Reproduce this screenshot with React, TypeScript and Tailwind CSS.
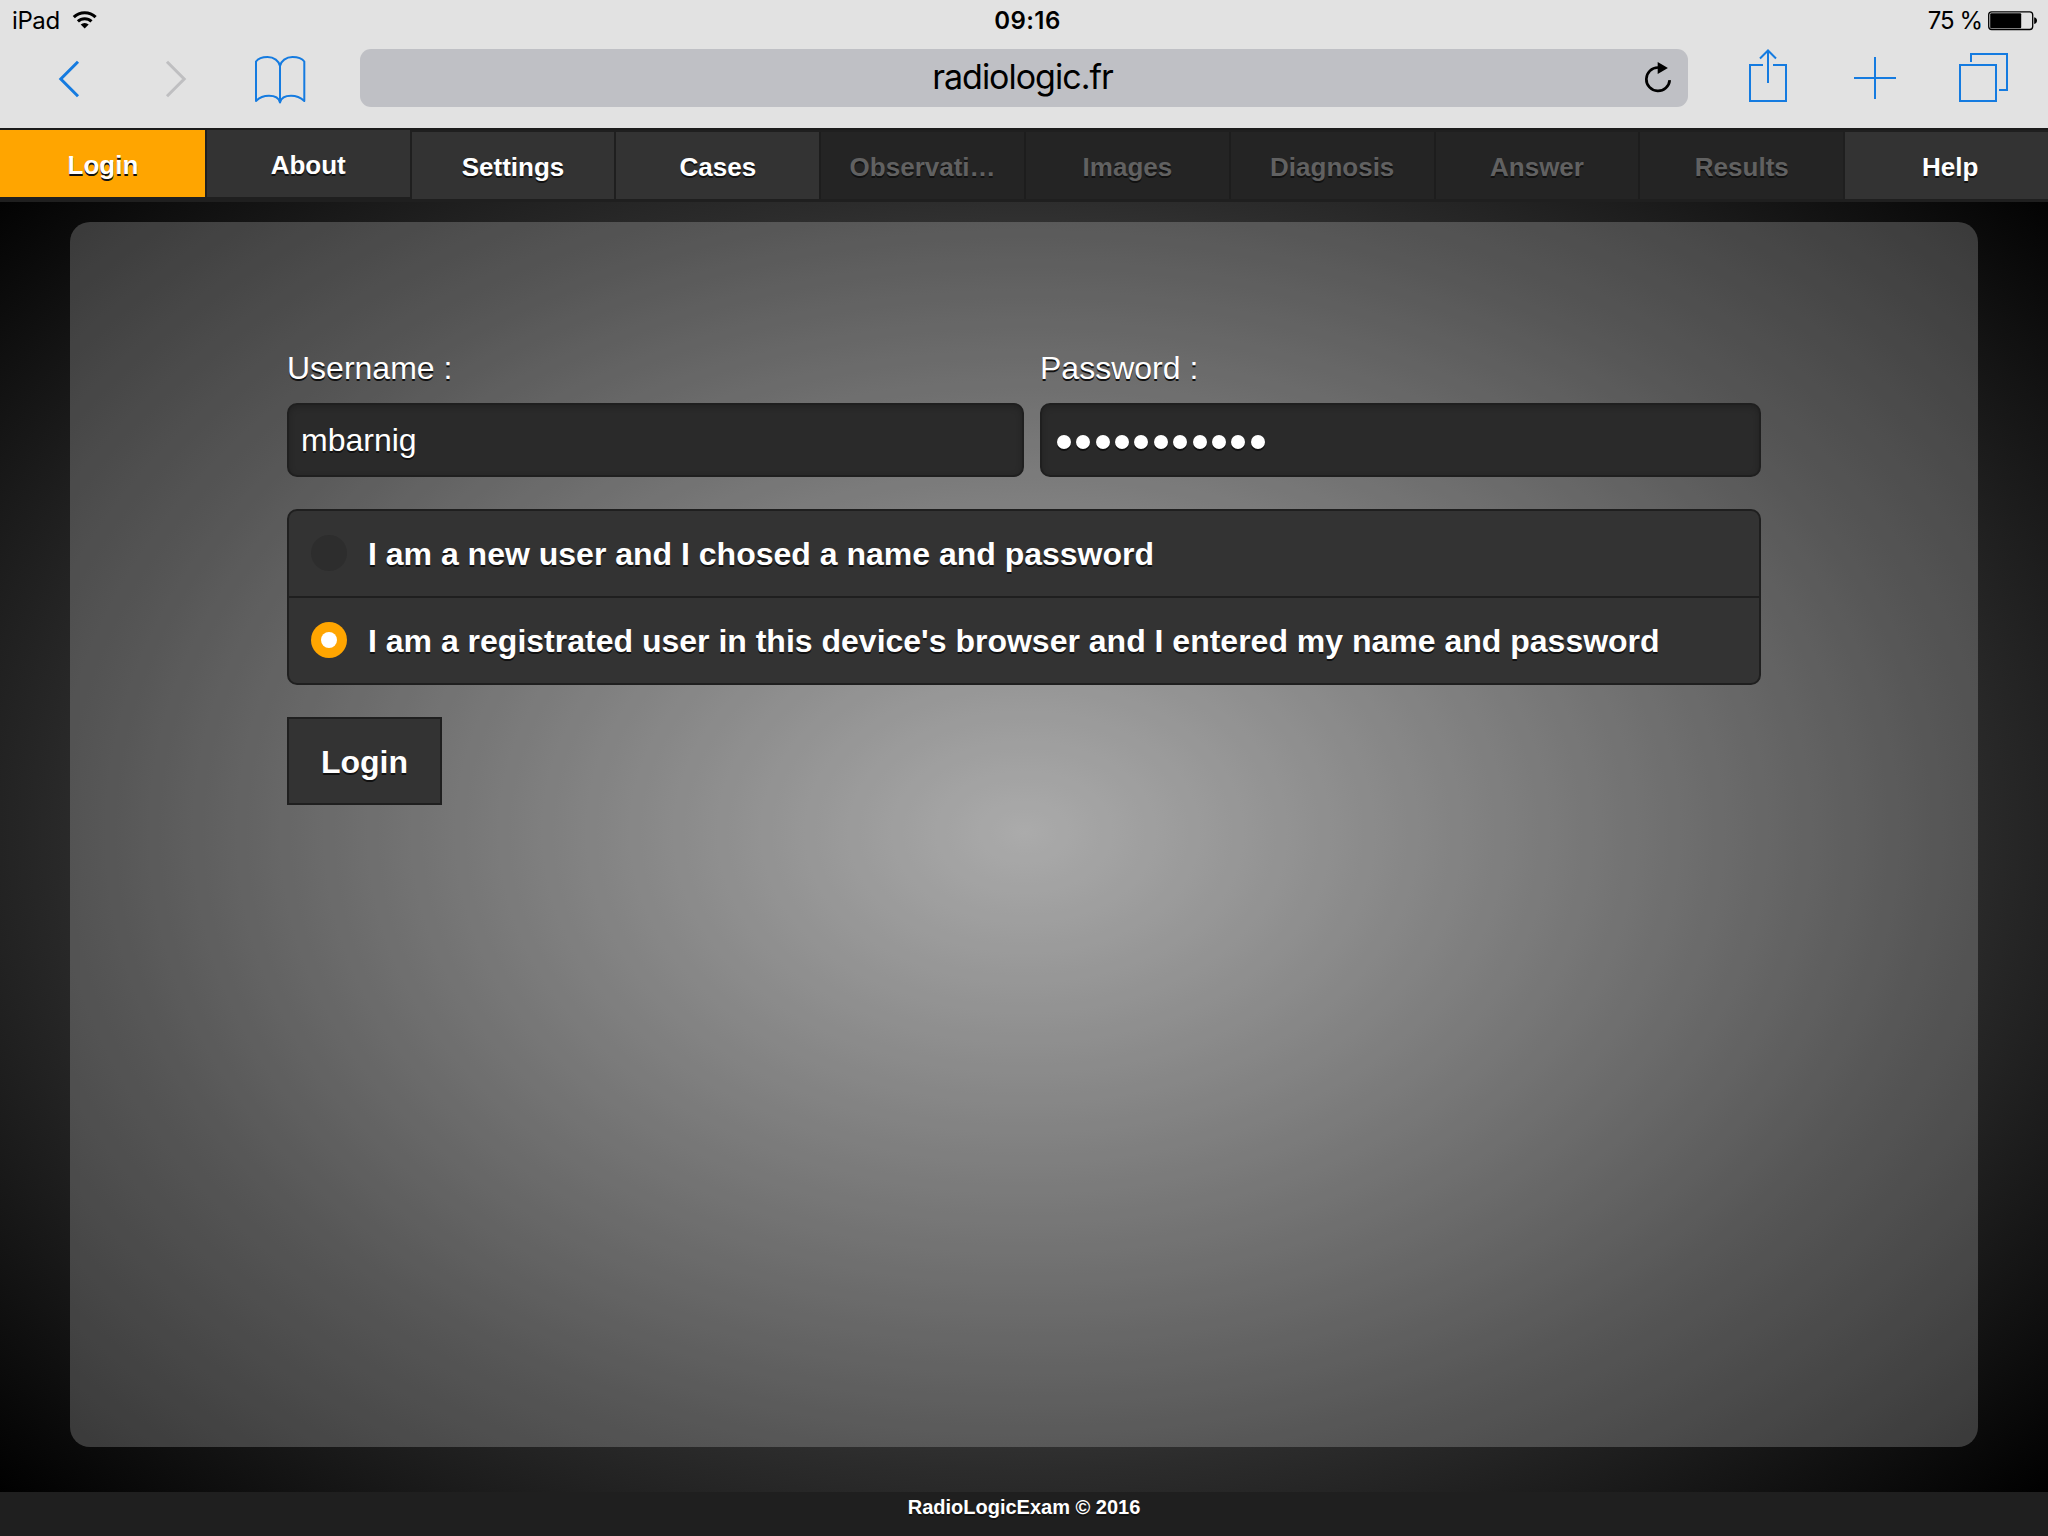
import React from "react";

type Tab = { label: string; state: "active" | "raised" | "normal" | "disabled" };

const tabs: Tab[] = [
  { label: "Login", state: "active" },
  { label: "About", state: "raised" },
  { label: "Settings", state: "normal" },
  { label: "Cases", state: "normal" },
  { label: "Observati…", state: "disabled" },
  { label: "Images", state: "disabled" },
  { label: "Diagnosis", state: "disabled" },
  { label: "Answer", state: "disabled" },
  { label: "Results", state: "disabled" },
  { label: "Help", state: "normal" },
];

const tabStyles: Record<Tab["state"], string> = {
  active: "mt-0 bg-[#ffa500] text-white border-[#1f1f1f]",
  raised: "mt-0 bg-[#333333] text-white border-[#1f1f1f]",
  normal: "mt-[2px] bg-[#333333] text-white border-[#1f1f1f]",
  disabled: "mt-[2px] bg-[#242424] text-[#616161] border-[#1d1d1d]",
};

function StatusBar() {
  return (
    <div className="grid h-10 grid-cols-3 items-start pt-[5px] pl-3 pr-[11px] text-[24px] leading-8 text-black">
      <div className="flex items-start">
        <span className="tracking-[-0.4px]">iPad</span>
        <svg className="ml-[12px] mt-[5px]" width="26" height="20" viewBox="72 10 26 20" fill="none" stroke="#000">
          <path d="M73.8 17.2a15.6 15.6 0 0 1 21.8 0" strokeWidth="3.1" />
          <path d="M77.9 21.4a9.8 9.8 0 0 1 13.6 0" strokeWidth="3" />
          <path d="M84.7 28.6l-4-4.1a5.8 5.8 0 0 1 8 0z" fill="#000" stroke="none" />
        </svg>
      </div>
      <span className="pl-[6px] text-center font-semibold tracking-[0.4px]">09:16</span>
      <div className="flex items-start justify-end">
        <span className="tracking-[-1px]">75 %</span>
        <svg className="ml-[5px] mt-[5px]" width="50" height="21" viewBox="1987 10 50 21" fill="none">
          <rect x="1988.7" y="11.8" width="44" height="17.7" rx="3" stroke="#000" strokeWidth="1.3" />
          <rect x="1990.2" y="13.2" width="31" height="15" rx="1" fill="#000" />
          <path d="M2034.2 17.2q2.8.6 2.8 3.4t-2.8 3.4z" fill="#000" />
        </svg>
      </div>
    </div>
  );
}

function Toolbar() {
  return (
    <div className="flex h-[88px] items-start text-[#157be0]">
      <svg className="ml-14" width="28" height="88" viewBox="56 40 28 88" fill="none" stroke="currentColor" strokeWidth="3">
        <path d="M78 61.8 60.8 79 78 96.3" />
      </svg>
      <svg className="ml-[76px]" width="28" height="88" viewBox="160 40 28 88" fill="none" stroke="#bfbfc1" strokeWidth="3">
        <path d="M167 61.8 184.2 79 167 96.3" />
      </svg>
      <svg className="ml-[62px]" width="60" height="88" viewBox="250 40 60 88" fill="none" stroke="currentColor" strokeWidth="2" strokeLinejoin="round">
        <path d="M280 66c-1-5-6-9-12.500-9-5 0-9.500 1.800-11.500 4.500v39.500c3-3 8-5.200 13-5.200 6 0 10 2.700 11 6.700 1-4 5-6.700 11-6.700 5 0 10 2.200 13.300 5.200V61.500c-2-2.700-6.500-4.500-11.800-4.500-6.500 0-11.500 4-12.500 9z" />
        <path d="M280 66v37" />
      </svg>
      <div className="ml-[50px] mt-[9px] flex h-[58px] w-[1328px] items-center rounded-[11px] bg-[#bfc0c5]">
        <span className="flex-1 pb-[2px] pl-[43px] text-center text-[34px] leading-[56px] tracking-[-1px] text-black">
          radiologic.fr
        </span>
        <svg className="mr-[14px]" width="32" height="40" viewBox="1642 58 32 40" fill="none">
          <path d="M1658 67.500a11.7 11.7 0 1 0 11.700 12.600" stroke="#000" strokeWidth="2.7" />
          <path d="M1657.700 62l10.200 6-10.200 6.100z" fill="#000" />
        </svg>
      </div>
      <svg className="ml-14" width="48" height="88" viewBox="1744 40 48 88" fill="none" stroke="currentColor" strokeWidth="2">
        <path d="M1763 65h-13v36h36V65h-13M1768 83V51M1760 58.500l8-8 8 8" />
      </svg>
      <svg className="ml-[58px]" width="50" height="88" viewBox="1850 40 50 88" fill="none" stroke="currentColor" strokeWidth="2">
        <path d="M1854 78h42M1875 57v42" />
      </svg>
      <svg className="ml-14" width="55" height="88" viewBox="1956 40 55 88" fill="none" stroke="currentColor" strokeWidth="2">
        <path d="M1960 65h36v36h-36zM1971 62v-8h36v36h-8" />
      </svg>
    </div>
  );
}

function NavBar() {
  return (
    <nav className="grid h-[74px] grid-cols-10 border-t-2 border-[#1a1a1a] bg-[#1f1f1f]">
      {tabs.map((tab) => (
        <a
          key={tab.label}
          className={`h-[67px] border-l-2 pt-px text-center text-[26px] font-bold leading-[68px] first:border-l-0 first:pl-px last:pl-[7px] [text-shadow:0_2px_0_#111] ${tabStyles[tab.state]}`}
        >
          {tab.label}
        </a>
      ))}
    </nav>
  );
}

function RadioRow({ label, checked }: { label: string; checked: boolean }) {
  return (
    <label className="flex h-[85px] items-center border-[#1f1f1f] pb-[2px] pl-[22px] first:h-[87px] first:border-b-2">
      <span
        className={`flex size-9 shrink-0 items-center justify-center rounded-full ${checked ? "bg-[#ffa500]" : "bg-[#2d2d2d]"}`}
      >
        {checked && <span className="size-4 rounded-full bg-white" />}
      </span>
      <span className="ml-[21px] whitespace-nowrap pt-[2px] font-bold">{label}</span>
    </label>
  );
}

const fieldStyle =
  "flex h-[74px] items-center rounded-[10px] border-2 border-[#1f1f1f] bg-[#2a2a2a] shadow-[inset_0_2px_6px_rgba(0,0,0,0.2)]";

function LoginForm() {
  return (
    <form className="mx-auto mt-[126px] w-[1474px] text-[32px] leading-10 text-white [text-shadow:0_2px_0_#111]">
      <div className="flex gap-4">
        <div className="w-[737px]">
          <div>Username :</div>
          <div className={`mt-[15px] pl-[12px] ${fieldStyle}`}>mbarnig</div>
        </div>
        <div className="w-[721px]">
          <div>Password :</div>
          <div className={`mt-[15px] gap-[5.36px] pl-[15px] pt-[3px] ${fieldStyle}`}>
            {Array.from({ length: 11 }, (_, i) => (
              <span key={i} className="size-[14px] rounded-full bg-white shadow-[0_2px_0_#111]" />
            ))}
          </div>
        </div>
      </div>
      <div className="mt-8 rounded-[10px] border-2 border-[#1f1f1f] bg-[#333333]">
        <RadioRow label="I am a new user and I chosed a name and password" checked={false} />
        <RadioRow
          label="I am a registrated user in this device's browser and I entered my name and password"
          checked={true}
        />
      </div>
      <button
        type="button"
        className="mt-8 h-[88px] w-[155px] border-2 border-[#1f1f1f] bg-[#333333] pt-[2px] font-bold [text-shadow:0_2px_0_#111]"
      >
        Login
      </button>
    </form>
  );
}

export default function App() {
  return (
    <div className="flex h-[1536px] w-[2048px] flex-col overflow-hidden bg-[#1f1f1f] font-['Liberation_Sans',Arial,sans-serif]">
      <header className="h-32 bg-[#e2e2e2] font-[Inter,sans-serif]">
        <StatusBar />
        <Toolbar />
      </header>
      <NavBar />
      <main className="flex h-[1290px] flex-col bg-[radial-gradient(1448px_996px_at_1024px_630px,#969696_0%,#2c2c2c_64%,#000_97%)] pt-5">
        <section className="mx-[70px] flow-root h-[1225px] rounded-[20px] bg-white/20">
          <LoginForm />
        </section>
      </main>
      <footer className="h-[44px] pt-[3px] text-center text-[20px] font-bold leading-6 text-white [text-shadow:0_2px_0_#111]">
        RadioLogicExam © 2016
      </footer>
    </div>
  );
}
